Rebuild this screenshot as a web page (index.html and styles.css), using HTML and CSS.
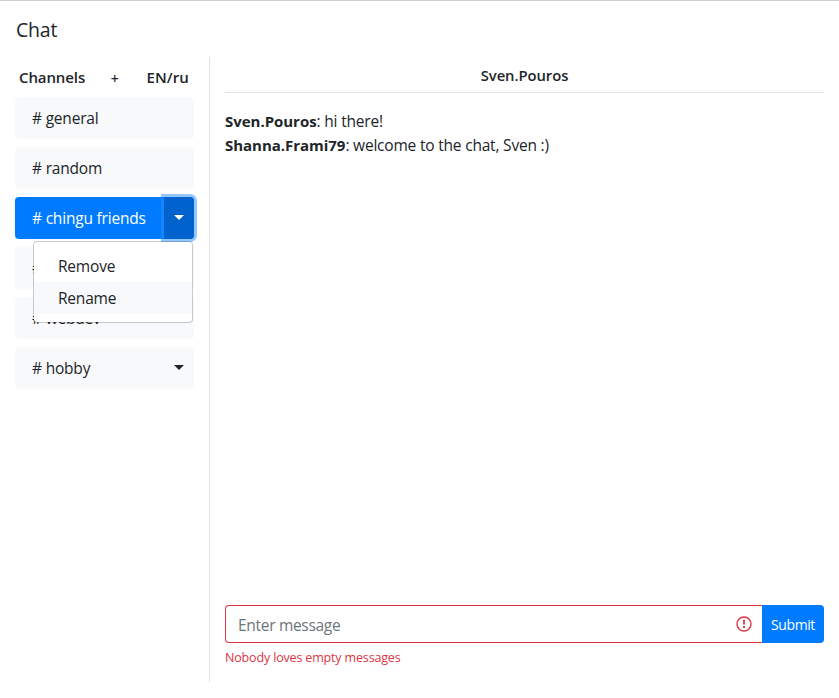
FILE: index.html
```html
<!DOCTYPE html>
<html lang="en">
<head>
<meta charset="utf-8">
<title>Chat</title>
<link rel="stylesheet" href="styles.css">
</head>
<body>
<header class="brand"><span>Chat</span></header>
<div class="layout">
  <aside class="sidebar">
    <div class="sidebar-head">
      <span class="title">Channels</span>
      <button class="plain add">+</button>
      <button class="plain lang">EN/ru</button>
    </div>
    <ul class="channels">
      <li class="channel"><button class="name"># general</button></li>
      <li class="channel"><button class="name"># random</button></li>
      <li class="channel active">
        <button class="name"># chingu friends</button>
        <button class="toggle" aria-label="Channel menu"><i class="caret"></i></button>
        <div class="menu">
          <a class="item">Remove</a>
          <a class="item hover">Rename</a>
        </div>
      </li>
      <li class="channel"><button class="name">#</button></li>
      <li class="channel"><button class="name"># webdev</button></li>
      <li class="channel">
        <button class="name"># hobby</button>
        <button class="toggle" aria-label="Channel menu"><i class="caret"></i></button>
      </li>
    </ul>
  </aside>
  <main class="main">
    <div class="user">Sven.Pouros</div>
    <div class="messages">
      <div><b>Sven.Pouros</b>: hi there!</div>
      <div><b>Shanna.Frami79</b>: welcome to the chat, Sven :)</div>
    </div>
    <form class="composer">
      <div class="group">
        <div class="field">
          <span class="placeholder">Enter message</span>
          <svg class="alert" width="16" height="16" viewBox="0 0 16 16" fill="none" stroke="#dc3545"><circle cx="8" cy="8" r="7" stroke-width="1.4"/><path d="M8 3.8v4.6" stroke-width="1.8"/><path d="M8 10v2" stroke-width="2"/></svg>
        </div>
        <button class="submit" type="button">Submit</button>
      </div>
      <div class="error">Nobody loves empty messages</div>
    </form>
  </main>
</div>
</body>
</html>
```

FILE: styles.css
```css
* { box-sizing: border-box; }
body {
  margin: 0;
  height: 698px;
  padding: 0 15px 16px;
  border-top: 1px solid #d0d0d0;
  display: flex;
  flex-direction: column;
  overflow: hidden;
  background: #fff;
  color: #212529;
  font: 15.5px/24px "Open Sans", "Noto Sans", sans-serif;
  letter-spacing: -.2px;
}
button { font: inherit; letter-spacing: inherit; color: inherit; border: 0; margin: 0; padding: 0; background: transparent; }
b { font-size: 15px; letter-spacing: -.03px; }
.brand { height: 56px; padding: 14px 1px 0; font-size: 19.5px; line-height: 30px; }
.layout { flex: 1; display: flex; min-height: 0; }
.sidebar { width: 195px; padding-right: 15px; border-right: 1px solid #dee2e6; }
.sidebar-head { height: 40px; padding: 8px 5px 8px 4px; display: flex; justify-content: space-between; font-size: 15px; font-weight: 600; letter-spacing: -.1px; }
.plain { font-weight: 600; }
.lang { letter-spacing: .1px; }
.add { padding: 2px 2px 0 0; font-size: 14px; }
.channels { list-style: none; margin: 0; padding: 0; display: grid; gap: 8px; }
.channel { position: relative; height: 42px; display: flex; border-radius: 4px; background: #f8f9fa; }
.name { flex: 1; padding: 0 0 1px 17px; text-align: left; white-space: nowrap; }
.toggle { width: 30px; display: flex; align-items: center; justify-content: center; border-radius: 0 4px 4px 0; }
.caret { border-top: 5px solid; border-left: 5px solid transparent; border-right: 5px solid transparent; position: relative; top: -1px; }
.active { background: #007bff; color: #fff; }
.active .toggle { background: #0062cc; box-shadow: 0 0 0 3px rgba(38, 143, 255, .5); }
.menu {
  position: absolute; z-index: 2; top: 44px; left: 18px; width: 160px;
  padding: 8px 0; border: 1px solid rgba(0, 0, 0, .2); border-radius: 4px;
  background: #fff; background-clip: padding-box; color: #212529;
}
.item { display: block; height: 32px; padding: 4px 24px; }
.hover { background: #f8f9fa; }
.main { flex: 1; padding-left: 15px; display: flex; flex-direction: column; min-width: 0; }
.user { height: 36px; padding-top: 6px; border-bottom: 1px solid #dee2e6; text-align: center; font-weight: 600; font-size: 14.8px; letter-spacing: -.05px; }
.messages { flex: 1; padding-top: 16px; white-space: nowrap; }
.composer { height: 77px; }
.group { height: 38px; display: flex; }
.field { flex: 1; padding: 0 10px 0 12px; display: flex; align-items: center; justify-content: space-between; border: 1px solid #dc3545; border-right: 0; border-radius: 4px 0 0 4px; color: #6c757d; }
.placeholder { padding-top: 2px; letter-spacing: -.3px; }
.submit { width: 62px; padding-top: 2px; border-radius: 0 4px 4px 0; background: #007bff; color: #fff; font-size: 14px; letter-spacing: -.4px; }
.error { padding-top: 3px; color: #dc3545; font-size: 12.5px; letter-spacing: -.16px; }
```
